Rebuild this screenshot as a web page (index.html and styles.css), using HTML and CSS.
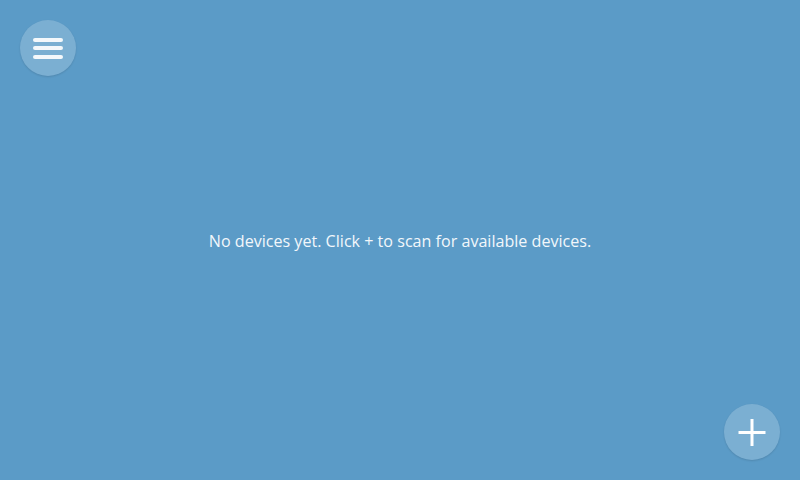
FILE: index.html
```html
<!DOCTYPE html>
<html>
<head>
<meta charset="utf-8">
<link rel="stylesheet" href="styles.css">
</head>
<body>
<div class="app">
  <header class="top">
    <button class="fab menu" aria-label="Menu">
      <span class="bar"></span><span class="bar"></span><span class="bar"></span>
    </button>
  </header>
  <main class="empty">No devices yet. Click + to scan for available devices.</main>
  <footer class="bottom">
    <button class="fab add" aria-label="Add">
      <svg width="28" height="28" viewBox="0 0 28 28"><path d="M14 1v27M0.5 14.5h27" stroke="#fff" stroke-width="3" fill="none"/></svg>
    </button>
  </footer>
</div>
</body>
</html>
```
FILE: styles.css
```css
html, body { margin: 0; padding: 0; }
body {
  width: 800px; height: 480px; overflow: hidden;
  background: #5b9bc7;
  font-family: "Open Sans", "Noto Sans", sans-serif;
}
.app {
  height: 480px;
  display: flex; flex-direction: column;
  box-sizing: border-box;
  padding: 20px;
}
.top, .bottom { display: flex; }
.bottom { justify-content: flex-end; }
.fab {
  width: 56px; height: 56px; border-radius: 50%;
  border: none; padding: 0; margin: 0;
  background: rgba(255,255,255,0.2);
  box-shadow: 0 1px 2px rgba(0,0,0,0.12);
  display: flex; flex-direction: column; align-items: center; justify-content: center;
}
.menu { gap: 4.5px; }
.bar {
  display: block; width: 30px; height: 4px; border-radius: 2px;
  background: #f4f8fb;
}
.empty {
  flex: 1;
  display: flex; align-items: center; justify-content: center;
  color: #f2f7fb;
  font-size: 16.1px;
  padding-top: 1px;
}
```
